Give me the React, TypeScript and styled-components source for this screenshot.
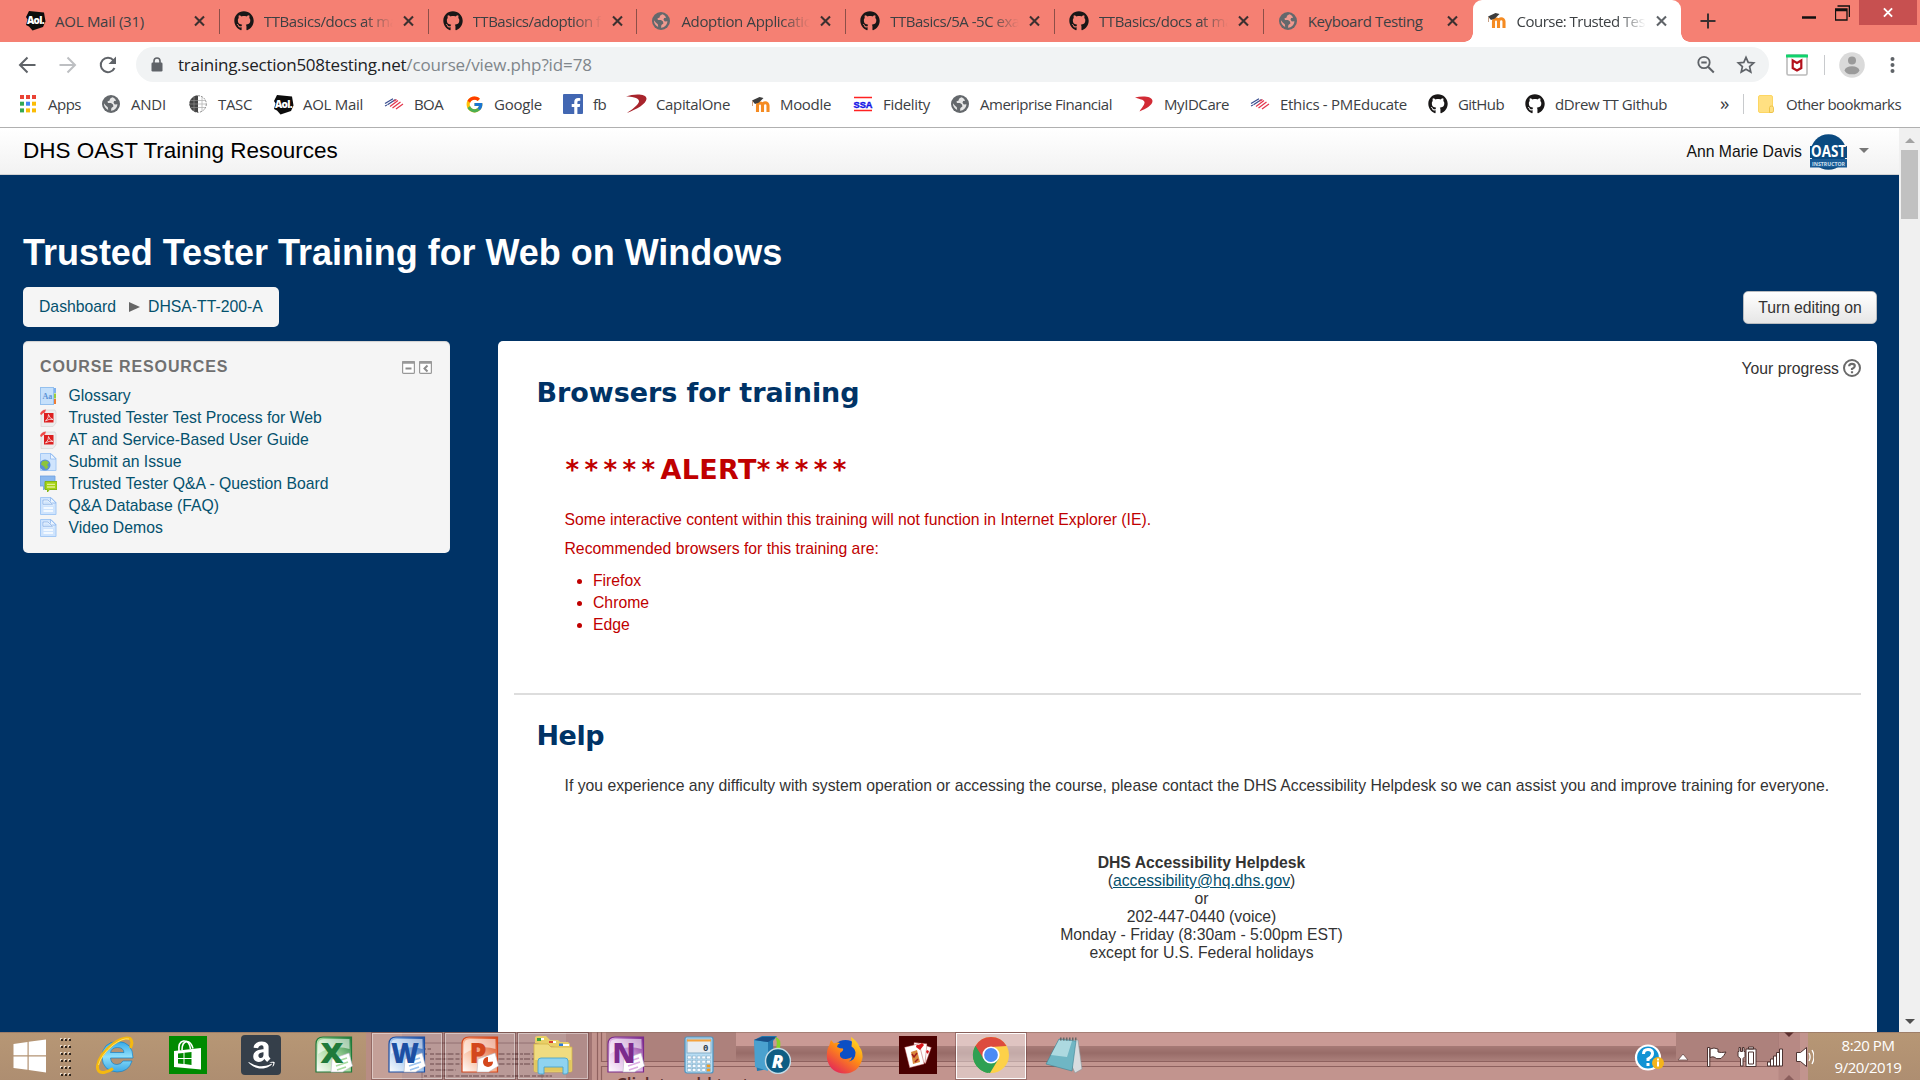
import React from 'react';
import styled, { createGlobalStyle, css } from 'styled-components';
import { FaGithub, FaFacebookF, FaAmazon } from 'react-icons/fa';
import { FcGoogle } from 'react-icons/fc';

const ui = "'Open Sans', 'Noto Sans', sans-serif";
const page = "'Liberation Sans', Arial, sans-serif";
const heading = "'DejaVu Sans', Verdana, sans-serif";

const GlobalStyle = createGlobalStyle`
  * { box-sizing: border-box; }
  body { margin: 0; background: #003366; }
  svg { display: block; flex: none; }
`;

/* ---------- window ---------- */

const Window = styled.div`
  width: 1920px;
  height: 1080px;
  display: flex;
  flex-direction: column;
  overflow: hidden;
  font-family: ${ui};
  color: #3c4043;
`;

const TabStrip = styled.div`
  height: 42px;
  flex: none;
  display: flex;
  padding-left: 11px;
  background: #f58073;
`;

const Tab = styled.div<{ $active?: boolean; $last?: boolean }>`
  position: relative;
  width: 208.8px;
  flex: none;
  display: flex;
  align-items: center;
  padding: 0 0 1px 14px;
  gap: 10px;
  ${p => p.$active && css`
    background: #fff;
    border-radius: 9px 9px 0 0;
    &::before, &::after {
      content: '';
      position: absolute;
      bottom: 0;
      width: 9px;
      height: 9px;
    }
    &::before { left: -9px; background: radial-gradient(circle at 0 0, transparent 8.5px, #fff 9px); }
    &::after { right: -9px; background: radial-gradient(circle at 100% 0, transparent 8.5px, #fff 9px); }
  `}
  ${p => !p.$active && !p.$last && css`
    &::after {
      content: '';
      position: absolute;
      right: 0;
      top: 9px;
      width: 1px;
      height: 25px;
      background: #8c4f48;
    }
  `}
`;

const TabTitle = styled.span<{ $fade?: boolean; $track?: number }>`
  width: 129px;
  overflow: hidden;
  white-space: nowrap;
  font-size: 15px;
  letter-spacing: ${p => p.$track ?? -0.4}px;
  ${p => p.$fade && css`mask-image: linear-gradient(90deg, #000 100px, transparent 129px);`}
`;

const NewTab = styled.div`
  display: flex;
  align-items: center;
  padding: 0 0 1px 19px;
`;

const WindowButtons = styled.div`
  margin-left: auto;
  padding-right: 3px;
  display: flex;
  align-items: flex-start;
`;

const CaptionButton = styled.div<{ $w: number }>`
  width: ${p => p.$w}px;
  height: 25px;
  display: flex;
  align-items: center;
  justify-content: center;
`;

const CloseButton = styled(CaptionButton)`
  background: #c75050;
`;

const Toolbar = styled.div`
  height: 45px;
  flex: none;
  display: flex;
  align-items: center;
  background: #fff;
  padding-left: 17px;
`;

const NavButtons = styled.div`
  display: flex;
  width: 119px;
  gap: 18px;
`;

const Omnibox = styled.div`
  width: 1633px;
  height: 35px;
  border-radius: 18px;
  background: #f1f3f4;
  display: flex;
  align-items: center;
  padding: 0 12px 0 13px;
`;

const Url = styled.span`
  margin-left: 13px;
  margin-right: auto;
  font-size: 17px;
  letter-spacing: -0.12px;
  color: #80868b;
  b { font-weight: 400; color: #202124; letter-spacing: -0.25px; }
`;

const OmniIcons = styled.div`
  display: flex;
  gap: 18px;
`;

const Extensions = styled.div`
  display: flex;
  align-items: center;
  padding-left: 17px;
`;

const VRule = styled.i<{ $ml: number; $mr: number }>`
  width: 1px;
  height: 20px;
  margin: 0 ${p => p.$mr}px 0 ${p => p.$ml}px;
  background: #c8cacd;
`;

const Bookmarks = styled.div`
  height: 41px;
  flex: none;
  display: flex;
  align-items: center;
  padding: 0 0 6px 18px;
  background: #fff;
  border-bottom: 1px solid #b0b0b0;
`;

const Bookmark = styled.div<{ $w: number }>`
  width: ${p => p.$w}px;
  display: flex;
  align-items: center;
  gap: 10px;
`;

const IconSlot = styled.div`
  width: 20px;
  display: flex;
  justify-content: center;
`;

const BookmarkLabel = styled.span<{ $track: number }>`
  font-size: 15px;
  white-space: nowrap;
  letter-spacing: ${p => p.$track}px;
`;

const Chevrons = styled.span`
  font-size: 19px;
  line-height: 20px;
  width: 15px;
  padding-bottom: 3px;
`;

/* ---------- web page ---------- */

const Viewport = styled.div`
  flex: 1;
  min-height: 0;
  display: flex;
`;

const Page = styled.div`
  width: 1899px;
  display: flex;
  flex-direction: column;
  background: #003366;
  font-family: ${page};
  font-size: 15.75px;
  line-height: 22px;
  color: #333;
`;

const SiteHeader = styled.header`
  height: 47px;
  flex: none;
  display: flex;
  align-items: center;
  justify-content: space-between;
  padding: 0 29px 0 23px;
  background: linear-gradient(#fff, #f2f2f2);
  border-bottom: 1px solid #d4d4d4;
  color: #000;
`;

const SiteName = styled.div`
  font-size: 22.5px;
  line-height: 28px;
  padding-bottom: 1px;
`;

const UserMenu = styled.div`
  display: flex;
  align-items: center;
  padding-top: 2px;
  color: #111;
`;

const Caret = styled.i`
  margin: 0 1px 4px 12px;
  border: 5px solid transparent;
  border-top-color: #777;
  border-bottom: 0;
`;

const Content = styled.div`
  flex: 1;
  min-height: 0;
  display: flex;
  flex-direction: column;
  padding: 58px 22px 0 23px;
`;

const Title = styled.h1`
  margin: 0 0 14px;
  font-size: 36px;
  line-height: 40px;
  letter-spacing: -0.03px;
  color: #fff;
`;

const NavRow = styled.div`
  display: flex;
  align-items: center;
  justify-content: space-between;
  margin-bottom: 14px;
`;

const Breadcrumb = styled.nav`
  height: 40px;
  display: flex;
  align-items: center;
  padding: 0 16px 1px 16px;
  border-radius: 5px;
  background: #f5f5f5;
  color: #04516d;
`;

const Arrow = styled.i`
  margin: 0 8px 0 13px;
  border: 5px solid transparent;
  border-left: 11px solid #666;
  border-right: 0;
`;

const EditButton = styled.button`
  width: 134px;
  height: 33px;
  margin-top: 1px;
  padding: 0;
  border: 1px solid #b9bcc0;
  border-radius: 5px;
  background: linear-gradient(#fff, #e6e6e6);
  font: 15.75px ${page};
  letter-spacing: -0.08px;
  color: #333;
`;

const Columns = styled.div`
  flex: 1;
  min-height: 0;
  display: flex;
  align-items: flex-start;
  gap: 48px;
`;

const Block = styled.aside`
  width: 427px;
  height: 212px;
  padding: 15px 18px 0 17px;
  border-radius: 5px;
  background: #f5f5f5;
  box-shadow: inset 0 1px 1px rgba(0, 0, 0, 0.15);
`;

const BlockHeader = styled.div`
  display: flex;
  align-items: center;
  margin-bottom: 7px;
  gap: 4px;
`;

const BlockTitle = styled.h2`
  margin: 0 auto 0 0;
  font-size: 16px;
  letter-spacing: 0.88px;
  color: #707070;
`;

const ResourceLink = styled.a`
  display: flex;
  align-items: center;
  gap: 11.5px;
  height: 22px;
  color: #04516d;
  svg { margin-bottom: 1px; }
`;

const Main = styled.main`
  flex: 1;
  align-self: stretch;
  overflow: hidden;
  padding: 17px 16px 0;
  border-radius: 5px 5px 0 0;
  background: #fff;
`;

const Progress = styled.div`
  display: flex;
  align-items: center;
  justify-content: flex-end;
  gap: 4px;
  height: 22px;
  svg { margin-bottom: 2px; }
`;

const SectionTitle = styled.h3<{ $mt: number; $track: number }>`
  margin: ${p => p.$mt}px 0 0 22.5px;
  font: 700 27px/32px ${heading};
  letter-spacing: ${p => p.$track}px;
  color: #003366;
`;

const Alert = styled.div`
  padding-left: 50.5px;
  color: #c00000;
  p { margin: 0 0 7px; }
`;

const AlertTitle = styled.h3`
  margin: 45px 0 23px 1px;
  font: 700 27px/32px ${heading};
  letter-spacing: 0.35px;
  i { font-style: normal; font-weight: 700; font-size: 26px; letter-spacing: 5.4px; }
`;

const BrowserList = styled.ul`
  margin: 10px 0 57px;
  padding-left: 28.5px;
`;

const Divider = styled.hr`
  margin: 0;
  border: 0;
  height: 2px;
  background: #ddd;
`;

const HelpText = styled.p`
  margin: 23px 0 57px 50.5px;
  white-space: nowrap;
`;

const Helpdesk = styled.address`
  margin-left: 28px;
  font-style: normal;
  line-height: 18px;
  text-align: center;
  a { color: #04516d; text-decoration: underline; }
`;

const Scrollbar = styled.div`
  width: 21px;
  display: flex;
  flex-direction: column;
  align-items: center;
  padding: 10px 0 8px;
  background: #f0f0f0;
`;

const ScrollArrow = styled.i<{ $down?: boolean }>`
  border: 5px solid transparent;
  ${p => p.$down
    ? 'border-top-color: #505050; border-bottom: 0; margin-top: auto;'
    : 'border-bottom-color: #a3a3a3; border-top: 0; margin-bottom: 7px;'}
`;

const Thumb = styled.div`
  width: 17px;
  height: 69px;
  background: #c1c1c1;
`;

/* ---------- taskbar ---------- */

const Taskbar = styled.div`
  position: relative;
  height: 48px;
  flex: none;
  display: flex;
  align-items: stretch;
  background: #c2948e;
  overflow: hidden;
`;

const Backdrop = styled.svg`
  position: absolute;
  inset: 0;
`;

const StartButton = styled.div`
  position: relative;
  width: 54px;
  display: flex;
  align-items: center;
  padding-left: 13px;
`;

const Grip = styled.div`
  position: relative;
  width: 24px;
  padding: 6px 0 0 6px;
`;

const TaskSlot = styled.div<{ $state?: 'open' | 'active' }>`
  position: relative;
  width: 73px;
  display: flex;
  align-items: center;
  justify-content: center;
  padding-bottom: 2px;
  ${p => p.$state && css`
    &::before {
      content: '';
      position: absolute;
      inset: 1px 1px 1px 2px;
      border: 1px solid rgba(255, 255, 255, ${p.$state === 'active' ? 0.95 : 0.42});
      background: rgba(255, 255, 255, ${p.$state === 'active' ? 0.42 : 0.17});
      outline: 1px solid rgba(80, 40, 40, 0.35);
    }
  `}
  svg { position: relative; }
`;

const Tray = styled.div`
  position: relative;
  margin-left: auto;
  display: flex;
  align-items: center;
`;

const Clock = styled.div`
  width: 104px;
  margin-left: 2px;
  font-size: 15px;
  line-height: 22px;
  letter-spacing: -0.45px;
  text-align: center;
  color: #fff;
`;

/* ---------- icons ---------- */

const CloseX = ({ c = '#3c3030', s = 11 }) => (
  <svg width={s} height={s + 1} viewBox="0 0 11 12"><path d="M1 1.5l9 9M10 1.5l-9 9" stroke={c} strokeWidth="2.1" /></svg>
);

const Aol = () => (
  <svg width="21" height="21" viewBox="0 0 21 21">
    <path d="M4 1l15 1.5 1.5 9L18 17 7.5 20.5 4 16.5 1 15 2.5 9.5 1 7z" fill="#0c0c0c" />
    <text x="10.4" y="13.6" fontFamily="Open Sans" fontWeight="800" fontSize="10" letterSpacing="-.7" textAnchor="middle" fill="#fff">Aol.</text>
  </svg>
);

const Globe = ({ land = '#e7e7e7' }) => (
  <svg width="18" height="18" viewBox="0 0 18 18">
    <circle cx="9" cy="9" r="9" fill="#64686c" />
    <path d="M10.3 2.2L8 3.8 7.6 5.6 5.4 6.4 6 8l3 .1 2 1.4.4 1.9-2 1.5-.4 2.9c3.6-.2 6.3-3 6.4-6.5l-2.6.2-1.3-1.7.6-1.7 2-.4C13.4 3.9 12.1 2.7 10.3 2.2zM1.9 8.2c0 3 1.6 5.6 4.3 6.7l-.4-2.7-1.8-1.4z" fill={land} />
  </svg>
);

const Tasc = () => (
  <svg width="18" height="18" viewBox="0 0 18 18">
    <circle cx="9" cy="9" r="8.3" fill="#fff" stroke="#8a8a8a" strokeDasharray="2 1" />
    <path d="M9 .5a8.5 8.5 0 0 0 0 17z" fill="#444" />
    <path d="M2 5.5h7M1 9h8M2 12.500h7M5 2v14" stroke="#999" strokeWidth=".6" />
    <path d="M9 5.5h7M9 9h8M9 12.500h7M13 2v14" stroke="#b5b5b5" strokeWidth=".8" />
  </svg>
);

const Boa = () => (
  <svg width="20" height="12" viewBox="0 0 20 12">
    <path d="M1 5.5L9 .8M3.5 6.800L11.500 1.500" stroke="#3a4e90" strokeWidth="1.300" />
    <path d="M1 8l2-1" stroke="#3a4e90" strokeWidth="1.200" />
    <path d="M6 8.500l8-6M8.500 10l8-6M12 11l7-5M9.500 3.200l3-1.700" stroke="#e4384e" strokeWidth="1.300" />
  </svg>
);

const Apps = () => (
  <svg width="16" height="18" viewBox="0 0 16 18">
    {['#ea4335', '#ea4335', '#ea4335', '#34a853', '#4285f4', '#fbbc05', '#34a853', '#fbbc05', '#fbbc05'].map((c, i) => (
      <rect key={i} x={(i % 3) * 6} y={Math.floor(i / 3) * 6.7} width="4" height="4" fill={c} />
    ))}
  </svg>
);

const Facebook = () => (
  <svg width="20" height="20" viewBox="0 0 20 20">
    <rect width="20" height="20" rx="1" fill="#4267b2" />
    <FaFacebookF x="5" y="4" size={16} color="#fff" />
  </svg>
);

const CapitalOne = () => (
  <svg width="21" height="20" viewBox="0 0 21 20">
    <path d="M0 2.500C8-.5 21-.5 20.500 5 20 10 11 15 1 19c5-3.500 12.500-8.500 12-12C12.500 3.500 5 2.500 0 2.500z" fill="#a8242c" />
  </svg>
);

const MyId = () => (
  <svg width="18" height="16" viewBox="0 0 18 16">
    <path d="M0 1.500C7-.5 17.500 0 17.500 5c0 4-6 7.500-13 10.500C6 12.500 10 9 9.500 6 9 3.500 4 3 0 1.500z" fill="#d22b35" />
  </svg>
);

const Moodle = () => (
  <svg width="21" height="17" viewBox="0 0 21 17">
    <path d="M7.500 16V9.500a2.400 2.400 0 0 1 5 0V16M12.500 9.500a2.600 2.600 0 0 1 5.500 0V16" fill="none" stroke="#f58b22" strokeWidth="3.100" />
    <path d="M2 4.500L9.500 1l4 1L9 6.500 5 8z" fill="#3d3d3d" />
    <path d="M2.500 5v5" stroke="#c9a184" strokeWidth="1" />
  </svg>
);

const Ssa = () => (
  <svg width="20" height="16" viewBox="0 0 20 16">
    <path d="M1 1.500h18M1 14.500h18" stroke="#f22" strokeWidth="1.700" />
    <text x="10" y="11.500" textAnchor="middle" textLength="19" lengthAdjust="spacingAndGlyphs" fontFamily="Liberation Sans" fontWeight="700" fontSize="9.500" fill="#1414e6" stroke="#1414e6" strokeWidth=".4">SSA</text>
  </svg>
);

const Folder = () => (
  <svg width="16" height="18" viewBox="0 0 16 18">
    <rect x=".5" y=".5" width="14" height="17" rx="1.500" fill="#ffe082" stroke="#fdd663" />
    <path d="M11.500 17.500v-5q0-1.500 2-1.500t2 1.500v3.500q0 1.500-1.500 1.500z" fill="#ffe082" stroke="#e9bd3c" strokeWidth=".8" />
  </svg>
);

const Doc = ({ kind }: { kind: string }) => (
  <svg width="17" height="18" viewBox="0 0 17 18">
    {kind === 'glossary' && <>
      <rect x="12" y="1" width="4" height="5" fill="#7fb0ee" /><rect x="12" y="6.500" width="4" height="5" fill="#9bce3b" /><rect x="12" y="12" width="4" height="5" fill="#ef7d35" />
      <rect x=".5" y=".5" width="13" height="17" fill="#c5e0fb" stroke="#94c0ee" />
      <text x="2.500" y="12" fontFamily="Liberation Serif" fontSize="8" fontWeight="700" fill="#5c93d6">Aa</text>
    </>}
    {kind === 'pdf' && <>
      <path d="M3 1h12l1 2v11l-3 3.500H1V5z" fill="#ececec" stroke="#d2d2d2" strokeWidth=".6" />
      <rect x="4" y="4" width="9.500" height="9.500" fill="#dd1f1f" />
      <path d="M0 5Q1 1 6 .500L5 3.500Q2 4 1.500 6z" fill="#f04a48" />
      <path d="M5.500 12Q9 9 8.500 5.500 9.500 9.500 13 10.500 9 9.500 5.500 12" fill="none" stroke="#fff" strokeWidth=".7" />
    </>}
    {(kind === 'doc' || kind === 'url') && <>
      <path d="M.5.5h10.500l5 5v12H.5z" fill="#cfe4fd" stroke="#a4c9f5" />
      <path d="M10.500.5v5.500h5.500z" fill="#eaf4ff" stroke="#8fb8ee" strokeWidth=".8" />
      {kind === 'doc' && <path d="M3.500 3.500h5l4 4h-9zM3.500 11h9.500M3.500 14h9.500" fill="none" stroke="#fff" strokeWidth="1.300" />}
      {kind === 'doc' && <path d="M3 3h5l4.500 4.300H3z" fill="none" stroke="#7da9e4" strokeWidth=".8" />}
      {kind === 'url' && <><circle cx="5" cy="12" r="5.500" fill="#5c8fd6" /><path d="M2 8.500l4-1 3 2-2 2.500 1.500 2-2.500 2.500-2-3-3-2z" fill="#8cc43c" /></>}
    </>}
    {kind === 'forum' && <>
      <path d="M0 1h15v10H7l-3.500 4V11H0z" fill="#8cb9ef" stroke="#6d9fe0" strokeWidth=".8" />
      <path d="M5 6.500h12v8H9.500L7.500 17v-2.500H5z" fill="#a5d314" stroke="#7db10a" strokeWidth=".9" />
      <path d="M7 9.300h8M7 12h8" stroke="#dff08f" strokeWidth="1.300" />
    </>}
  </svg>
);

const BlockButton = ({ d }: { d: string }) => (
  <svg width="13" height="13" viewBox="0 0 13 13">
    <rect x=".6" y=".6" width="11.800" height="11.800" rx="1" fill="#fff" stroke="#999" strokeWidth="1.200" />
    <path d="M0 1.500h13" stroke="#999" strokeWidth="2.500" />
    <path d={d} stroke="#8c8c8c" strokeWidth="2" fill="none" />
  </svg>
);

const HelpIcon = () => (
  <svg width="18" height="18" viewBox="0 0 18 18">
    <circle cx="9" cy="9" r="8" fill="#fff" stroke="#6a6a6a" strokeWidth="2" />
    <path d="M6.200 7.200Q6.200 4.800 9 4.800t2.800 2.200Q11.800 8.500 9 10v1" fill="none" stroke="#6a6a6a" strokeWidth="2.200" />
    <path d="M7.900 12.300h2.200v2H7.900z" fill="#6a6a6a" />
  </svg>
);

const Oast = () => (
  <svg width="37" height="36" viewBox="0 0 37 36">
    <circle cx="18.500" cy="18" r="17.800" fill="#0a4a80" />
    <rect x="0" y="12" width="37" height="12" fill="#0a4a80" />
    <text x="18.500" y="23.400" textAnchor="middle" textLength="35" lengthAdjust="spacingAndGlyphs" fontFamily="Open Sans" fontWeight="700" fontSize="16" fill="#fff">OAST</text>
    <rect x="0" y="25" width="37" height="8.500" fill="#1a5c96" />
    <text x="18.500" y="31.500" textAnchor="middle" textLength="33" lengthAdjust="spacingAndGlyphs" fontFamily="Open Sans" fontWeight="700" fontSize="6" fill="#cfe0ef">INSTRUCTOR</text>
  </svg>
);

const Windows = () => (
  <svg width="34" height="34" viewBox="0 0 34 34">
    <path d="M.5 5L14.500 3v13.300H.5zM15.700 2.800L33 .5v15.800H15.700zM.5 17.500h14v13.300L.5 29zM15.700 17.500H33v16L15.700 31z" fill="#fff" />
  </svg>
);

const GripDots = () => (
  <svg width="12" height="38" viewBox="0 0 12 38">
    {Array.from({ length: 18 }, (_, i) => (
      <g key={i}>
        <rect x={(i % 3) * 4} y={Math.floor(i / 3) * 7} width="2" height="2" fill="#e9d9c8" />
        <rect x={(i % 3) * 4 + 1} y={Math.floor(i / 3) * 7 + 1} width="2" height="2" fill="#30261e" />
      </g>
    ))}
  </svg>
);

const Ie = () => (
  <svg width="38" height="38" viewBox="0 0 38 38">
    <defs><linearGradient id="ie" x2="0" y2="1"><stop stopColor="#35a8e8" /><stop offset=".5" stopColor="#8fe0fb" /><stop offset="1" stopColor="#3ba9e6" /></linearGradient></defs>
    <path fillRule="evenodd" d="M37 22H14.500q.5 6.500 6.500 6.500 4 0 6-3.500h9Q32.500 36 21 36 6.500 35 6 21 6.500 6 21.500 5.500 37 6 37 22zM14.500 16.500h13.500Q27.500 11.500 21.500 11.500 15.500 11.500 14.500 16.500z" fill="url(#ie)" stroke="#1583c8" strokeWidth=".7" />
    <path d="M34.500 12Q37.500 5 34 2.500 28 0 17 8 3 19 1.500 30 1 37 8 36.500 13 35.500 17 32.500" fill="none" stroke="#f5b90f" strokeWidth="3" />
    <path d="M33 3Q27 1.500 17 9 5 19 2.500 29" fill="none" stroke="#ffe469" strokeWidth="1" />
  </svg>
);

const Store = () => (
  <svg width="38" height="38" viewBox="0 0 38 38">
    <rect width="38" height="38" fill="#008a00" />
    <path d="M5 15l27-3v21.500L5 31z" fill="#fff" />
    <path d="M10 15q-1-9 4.500-10 6-.5 7 8M13 14q0-8 5-8.500 4 0 6 7" fill="none" stroke="#fff" strokeWidth="1.600" />
    <path d="M9 17.500l5.500-.6v5H9zM15.500 16.800l7-.8v5.900h-7zM9 22.900h5.500v5L9 27.400zM15.500 22.900h7v6l-7-.8z" fill="#008a00" />
  </svg>
);

const Amazon = () => (
  <svg width="40" height="40" viewBox="0 0 40 40">
    <rect width="40" height="40" rx="4" fill="#353f4a" />
    <FaAmazon x="5" y="4.500" size={31} color="#fff" />
  </svg>
);

const Office = ({ letter, c, light }: { letter: string; c: string; light: string }) => (
  <svg width="38" height="38" viewBox="0 0 38 38">
    <defs><linearGradient id={'of' + letter} x1="0" y1="1" x2="1" y2="0"><stop stopColor="#fff" /><stop offset=".5" stopColor={light} /><stop offset="1" stopColor={c} /></linearGradient></defs>
    <path d="M8 1h28.500v35H1V8Q1 1 8 1z" fill={`url(#of${letter})`} stroke={c} strokeWidth="1.200" />
    <path d="M3 9q0-6 6-6h25.500v10Q18 8 3 18z" fill="#fff" opacity=".55" />
    <path d="M17 23l17-6 3.500 13-10 6H16z" fill="#fff" stroke="#b9b9c4" strokeWidth=".6" />
    {letter === 'P'
      ? <><circle cx="27" cy="26" r="5" fill={c} /><path d="M27 26v-5.500a5.500 5.500 0 0 1 5.500 5z" fill="#fff" /></>
      : <path d="M20 26l12-4M21 30l12-4M22 34l9-3" stroke={light} strokeWidth="1.800" />}
    <text x="17" y="27" textAnchor="middle" textLength={letter === 'P' ? 17 : letter === 'W' ? 28 : 23} lengthAdjust="spacingAndGlyphs" fontFamily="Open Sans" fontWeight="800" fontSize="29" fill={c}>{letter}</text>
  </svg>
);

const Explorer = () => (
  <svg width="40" height="40" viewBox="0 0 40 40">
    <path d="M2 8V3q0-2 3-2h8l2 2 2 2h8l2 2h8l2 2v6z" fill="#e9cf66" />
    <path d="M6 3h5v2H6zM18 6h5v2h-5zM28 9h8v2h-8z" fill="#fff" /><path d="M4 3h4v3H4z" fill="#3da33b" /><path d="M16 6h4v2h-4z" fill="#d83b2e" /><path d="M26 8.500h4v2.500h-4z" fill="#2e7bd8" />
    <path d="M1 9h14l3 3h21v24q0 1-2 1H3q-2 0-2-1z" fill="#f0dc80" stroke="#d3b248" strokeWidth=".8" />
    <path d="M1.500 25h37v11h-37z" fill="#e2c75e" />
    <path d="M5 37V26q0-3 3-3h24q3 0 3 3v11q0 2-2 2h-3V32H11v7H7q-2 0-2-2z" fill="#8fd3ef" stroke="#4ba4cb" strokeWidth=".9" />
  </svg>
);

const Calc = () => (
  <svg width="30" height="38" viewBox="0 0 30 38">
    <rect x="1" y="1" width="28" height="36" rx="2" fill="#b6dcf3" stroke="#4a94c2" strokeWidth="1.200" />
    <rect x="3" y="3" width="24" height="14" fill="#e9edf0" stroke="#85aec9" /><path d="M3 4.500h24" stroke="#f5a23b" strokeWidth="2" />
    <text x="19" y="15" fontFamily="Liberation Mono" fontWeight="700" fontSize="9" fill="#26384a">0</text>
    {Array.from({ length: 20 }, (_, i) => <rect key={i} x={3.5 + (i % 5) * 4.8} y={20 + Math.floor(i / 5) * 4.2} width="3.600" height="2.900" fill={i % 5 === 4 && i > 9 ? '#f39a1d' : '#f7fbff'} stroke="#7ea9c4" strokeWidth=".5" />)}
  </svg>
);

const Revo = () => (
  <svg width="38" height="38" viewBox="0 0 38 38">
    <path d="M1 4l8-4h15l-4 5 1 27-17 3z" fill="#2378ad" /><path d="M1 4l14 2v29L2 31z" fill="#4aa1cf" /><path d="M1 4l8-3h15l-9 5z" fill="#1a4f86" />
    <path d="M22 1q7 1 5 12h4l-7 7-5-7h4Q25 5 22 1z" fill="#86d22c" />
    <circle cx="25" cy="25" r="12.500" fill="#0e5d84" stroke="#c5dbe6" strokeWidth="1.500" />
    <text x="24.500" y="31.500" textAnchor="middle" fontFamily="Open Sans" fontWeight="800" fontStyle="italic" fontSize="18" fill="#fff">R</text>
  </svg>
);

const Firefox = () => (
  <svg width="38" height="38" viewBox="0 0 38 38">
    <defs><linearGradient id="ff" x1=".9" y1="0" x2=".2" y2="1"><stop stopColor="#ffe226" /><stop offset=".45" stopColor="#ff9012" /><stop offset="1" stopColor="#e3225c" /></linearGradient></defs>
    <circle cx="19.500" cy="18.500" r="14.500" fill="#0c4fc4" />
    <path d="M25 1q6 4 8 9 5 7 3 14-4 13-17 13.500Q4 37 1 23 0 14 3.500 9q.5-3 1.500-5 2 2 3 3.500 3-1.500 6-.5-3 1.500-3 4 3 1.500 6 1.500 1 2-3 4.500-1 6 6 6 4-.5 6-2-.5 3-3.500 4.500 7-1 7-9-.5-4-4-6 1-5-.5-9z" fill="url(#ff)" />
  </svg>
);

const Solitaire = () => (
  <svg width="38" height="38" viewBox="0 0 38 38">
    <rect width="38" height="38" fill="#4a0000" />
    <g stroke="#a33" strokeWidth=".4">
      <rect x="18" y="9" width="12" height="17" fill="#fff" transform="rotate(20 24 17)" />
      <rect x="14" y="7" width="13" height="19" fill="#fff" transform="rotate(6 20 17)" />
      <rect x="8" y="9" width="15" height="21" fill="#fff" transform="rotate(-14 16 20)" />
    </g>
    <path d="M20 9l3-2 2 2-4 5-4-3q0-3 3-2z" fill="#d8161b" /><path d="M12 16l6-2 3 12-7 2z" fill="#d98a3d" /><path d="M13 18l2 3 3-4M16 26l3-3" stroke="#a01c1c" strokeWidth="1.500" fill="none" />
    <path d="M28 14l2 1-1 3-2-2z" fill="#d8161b" />
  </svg>
);

const Chrome = () => (
  <svg width="38" height="38" viewBox="0 0 38 38">
    <circle cx="19" cy="19" r="18" fill="#fdd149" />
    <path d="M19 19L3.400 10A18 18 0 0 0 18 37l8.500-14z" fill="#2ea052" />
    <path d="M3.400 10A18 18 0 0 1 34.600 10L19 11 11.500 23z" fill="#dd4b3e" />
    <path d="M3.400 10L12 24l7 4-3 9A18 18 0 0 1 3.400 10z" fill="#2ea052" />
    <circle cx="19" cy="19" r="8.600" fill="#fff" /><circle cx="19" cy="19" r="6.900" fill="#4b8bf5" />
  </svg>
);

const Notepad = () => (
  <svg width="38" height="38" viewBox="0 0 38 38">
    <path d="M15 3l18 1 4 29-7 4z" fill="#d8dcdf" stroke="#8b9499" strokeWidth=".6" />
    <path d="M14 3l17 2-4 30L1 28z" fill="#6fb6c4" stroke="#3e8394" strokeWidth=".6" />
    <path d="M14 4l13 1-5 16L6 19z" fill="#c8e8ec" opacity=".7" />
    <path d="M15 3h17" stroke="#666" strokeWidth="3" strokeDasharray="1.500 1.500" />
  </svg>
);

const TaskbarBackdrop = () => (
  <Backdrop width="1920" height="48" viewBox="0 0 1920 48">
    <defs>
      <linearGradient id="tan" x2="0" y2="1"><stop stopColor="#b79775" /><stop offset="1" stopColor="#ae8e71" /></linearGradient>
      <linearGradient id="dusk" x2="0" y2="1"><stop stopColor="#a87c78" /><stop offset=".5" stopColor="#986c68" /><stop offset="1" stopColor="#ab807b" /></linearGradient>
    </defs>
    <rect width="366" height="48" fill="url(#tan)" />
    <rect x="366" width="36" height="48" fill="#b88d84" />
    <rect x="402" width="164" height="48" fill="#ab8583" />
    <rect x="566" width="26" height="48" fill="#a27573" />
    <rect x="606" width="1173" height="29" fill="#ad817c" />
    <rect x="736" y="13" width="940" height="16" fill="url(#dusk)" />
    <rect x="736" width="940" height="14" fill="#c99a95" />
    <path d="M597.500 0v48M601.500 0v29.500H1779M1799 34.500H601.500V48M1779.500 0v48" fill="none" stroke="#8f625f" strokeWidth="1.200" />
    <rect x="1779" width="21" height="48" fill="#b78984" />
    <path d="M1784 0h10l-5 5z" fill="#5c2f2f" /><path d="M1784 48h10l-5-5z" fill="#8b5f5d" />
    <rect x="1808" width="112" height="48" fill="url(#tan)" />
    <path d="M422 48V11h120v37" fill="none" stroke="#7d5556" />
    <g stroke="#6d4646" strokeWidth="2" strokeDasharray="4 1.500 7 1 3 1 6 2">
      <path d="M422 17h9M424 22h3M430 22h104M430 27h104M430 32h104M430 38h26M424 44h3M430 44h122" opacity=".75" />
    </g>
    <text x="616" y="58.500" textLength="133" lengthAdjust="spacingAndGlyphs" fontFamily="Open Sans" fontWeight="600" fontSize="18" fill="#5b2f2c">Click to add text</text>
    <path d="M0 .5h1920" stroke="#8a6a5e" opacity=".55" />
  </Backdrop>
);

/* ---------- data ---------- */

const gh = <FaGithub size={20} color="#191717" />;

const tabs: { icon: React.ReactNode; title: string; fade?: boolean; active?: boolean; track?: number }[] = [
  { icon: <Aol />, title: 'AOL Mail (31)', track: -0.25 },
  { icon: gh, title: 'TTBasics/docs at ma', fade: true },
  { icon: gh, title: 'TTBasics/adoption f', fade: true, track: -0.49 },
  { icon: <Globe land="#f09a90" />, title: 'Adoption Applicatio', fade: true, track: -0.33 },
  { icon: gh, title: 'TTBasics/5A -5C exa', fade: true, track: -0.48 },
  { icon: gh, title: 'TTBasics/docs at ma', fade: true },
  { icon: <Globe land="#f09a90" />, title: 'Keyboard Testing' },
  { icon: <Moodle />, title: 'Course: Trusted Tes', fade: true, active: true, track: -0.53 },
];

const bookmarks: [React.ReactNode, string, number, number][] = [
  [<Apps />, 'Apps', 83, -0.5],
  [<Globe />, 'ANDI', 87, -0.22],
  [<Tasc />, 'TASC', 85, -0.35],
  [<Aol />, 'AOL Mail', 111, -0.28],
  [<Boa />, 'BOA', 80, -0.6],
  [<FcGoogle size={19} />, 'Google', 99, -0.22],
  [<Facebook />, 'fb', 63, -0.6],
  [<CapitalOne />, 'CapitalOne', 124, -0.35],
  [<Moodle />, 'Moodle', 103, -0.32],
  [<Ssa />, 'Fidelity', 97, -0.32],
  [<Globe />, 'Ameriprise Financial', 184, -0.48],
  [<MyId />, 'MyIDCare', 116, -0.43],
  [<Boa />, 'Ethics - PMEducate', 178, -0.29],
  [gh, 'GitHub', 97, -0.58],
  [gh, 'dDrew TT Github', 195, -0.41],
];

const resources = [
  ['glossary', 'Glossary'],
  ['pdf', 'Trusted Tester Test Process for Web'],
  ['pdf', 'AT and Service-Based User Guide'],
  ['url', 'Submit an Issue'],
  ['forum', 'Trusted Tester Q&A - Question Board'],
  ['doc', 'Q&A Database (FAQ)'],
  ['doc', 'Video Demos'],
];

const tasks: [React.ReactNode, ('open' | 'active')?][] = [
  [<Ie />], [<Store />], [<Amazon />],
  [<Office letter="X" c="#1f7a3a" light="#a9dba0" />],
  [<Office letter="W" c="#1d4fa3" light="#9cc3ee" />, 'open'],
  [<Office letter="P" c="#d4471c" light="#f7b08c" />, 'open'],
  [<Explorer />, 'open'],
  [<Office letter="N" c="#7b2a8c" light="#dcaee3" />],
  [<Calc />], [<Revo />], [<Firefox />], [<Solitaire />],
  [<Chrome />, 'active'], [<Notepad />],
];

/* ---------- app ---------- */

export default function App() {
  return (
    <Window>
      <GlobalStyle />
      <TabStrip>
        {tabs.map((t, i) => (
          <Tab key={i} $active={t.active} $last={i === 6}>
            <IconSlot>{t.icon}</IconSlot>
            <TabTitle $fade={t.fade} $track={t.track}>{t.title}</TabTitle>
            <CloseX c={t.active ? '#5f6368' : undefined} />
          </Tab>
        ))}
        <NewTab><svg width="16" height="16" viewBox="0 0 16 16"><path d="M8 .5v15M.5 8h15" stroke="#3a2f30" strokeWidth="2" /></svg></NewTab>
        <WindowButtons>
          <CaptionButton $w={34}><svg width="14" height="20"><path d="M0 14.500h14" stroke="#111" strokeWidth="2.500" /></svg></CaptionButton>
          <CaptionButton $w={33}><svg width="15" height="16"><path d="M.5 4h11.500v11H.5zM.5 5.500H12" fill="none" stroke="#111" strokeWidth="1.300" /><path d="M2.500 1h12v11" fill="none" stroke="#111" strokeWidth="1.600" /></svg></CaptionButton>
          <CloseButton $w={58}><CloseX c="#fff" s={10} /></CloseButton>
        </WindowButtons>
      </TabStrip>

      <Toolbar>
        <NavButtons>
          <svg width="22" height="22" viewBox="0 0 22 22"><path d="M18.500 11H3M10.500 3.500L3 11l7.500 7.500" fill="none" stroke="#5f6368" strokeWidth="2" /></svg>
          <svg width="22" height="22" viewBox="0 0 22 22"><path d="M2.500 11H18M10.500 3.500L18 11l-7.500 7.500" fill="none" stroke="#bdbfc2" strokeWidth="2" /></svg>
          <svg width="22" height="22" viewBox="0 0 22 22"><path d="M17.500 14A7.200 7.200 0 1 1 16.500 6.300" fill="none" stroke="#5f6368" strokeWidth="2" /><path d="M19 2.500v7.500h-7.500z" fill="#5f6368" /></svg>
        </NavButtons>
        <Omnibox>
          <svg width="16" height="18" viewBox="0 0 16 18"><rect x="2.500" y="6.500" width="11" height="9" rx="1.200" fill="#5f6368" /><path d="M5 7V5a3 3 0 0 1 6 0v2" fill="none" stroke="#5f6368" strokeWidth="1.600" /></svg>
          <Url><b>training.section508testing.net</b>/course/view.php?id=78</Url>
          <OmniIcons>
            <svg width="22" height="22" viewBox="0 0 22 22"><circle cx="9" cy="8.500" r="5.700" fill="none" stroke="#5f6368" strokeWidth="1.800" /><path d="M6.300 8.500h5.400M13.300 13l5.500 5.500" stroke="#5f6368" strokeWidth="2" /></svg>
            <svg width="22" height="22" viewBox="0 0 22 22"><path d="M11 3.300l2.200 5.100 5.500.5-4.100 3.700 1.200 5.400L11 15.200 6.200 18l1.200-5.400L3.300 8.900l5.500-.5z" fill="none" stroke="#5f6368" strokeWidth="1.700" /></svg>
          </OmniIcons>
        </Omnibox>
        <Extensions>
          <svg width="22" height="22" viewBox="0 0 22 22"><rect x="1" y="1" width="20" height="20" rx="1.500" fill="#fff" stroke="#bbb" strokeWidth="1.600" /><path d="M0 2h22" stroke="#10d36c" strokeWidth="3" /><path d="M6.700 6.500v7.500L11 16.500l4.300-2.500V6.500L11 9z" fill="none" stroke="#b3101c" strokeWidth="2.200" /></svg>
          <VRule $ml={16} $mr={14} />
          <svg width="26" height="26" viewBox="0 0 26 26"><circle cx="13" cy="13" r="12.800" fill="#dadada" /><circle cx="13" cy="8.500" r="4" fill="#9a9a9a" /><ellipse cx="13" cy="18.300" rx="7.300" ry="4" fill="#9a9a9a" /></svg>
          <svg width="54" height="20" viewBox="0 0 54 20"><g fill="#5f6368"><circle cx="27.500" cy="4" r="2" /><circle cx="27.500" cy="10" r="2" /><circle cx="27.500" cy="16" r="2" /></g></svg>
        </Extensions>
      </Toolbar>

      <Bookmarks>
        {bookmarks.map(([icon, label, w, track]) => (
          <Bookmark key={label} $w={w}><IconSlot>{icon}</IconSlot><BookmarkLabel $track={track}>{label}</BookmarkLabel></Bookmark>
        ))}
        <Chevrons>»</Chevrons>
        <VRule $ml={8} $mr={12} />
        <Bookmark $w={150}><IconSlot><Folder /></IconSlot><BookmarkLabel $track={-0.54}>Other bookmarks</BookmarkLabel></Bookmark>
      </Bookmarks>

      <Viewport>
        <Page>
          <SiteHeader>
            <SiteName>DHS OAST Training Resources</SiteName>
            <UserMenu>
              <span>Ann Marie Davis</span>
              <svg width="45" height="36"><g transform="translate(8)"><Oast /></g></svg>
              <Caret />
            </UserMenu>
          </SiteHeader>
          <Content>
            <Title>Trusted Tester Training for Web on Windows</Title>
            <NavRow>
              <Breadcrumb><span>Dashboard</span><Arrow /><span>DHSA-TT-200-A</span></Breadcrumb>
              <EditButton>Turn editing on</EditButton>
            </NavRow>
            <Columns>
              <Block>
                <BlockHeader>
                  <BlockTitle>COURSE RESOURCES</BlockTitle>
                  <BlockButton d="M3.500 7.500h6" />
                  <BlockButton d="M8.500 4.500L5.500 7.500l3 3" />
                </BlockHeader>
                {resources.map(([kind, label]) => (
                  <ResourceLink key={label}><Doc kind={kind} />{label}</ResourceLink>
                ))}
              </Block>
              <Main>
                <Progress><span>Your progress</span><HelpIcon /></Progress>
                <SectionTitle $mt={-3} $track={-0.06}>Browsers for training</SectionTitle>
                <Alert>
                  <AlertTitle><i>*****</i>ALERT<i>*****</i></AlertTitle>
                  <p>Some interactive content within this training will not function in Internet Explorer (IE).</p>
                  <p>Recommended browsers for this training are:</p>
                  <BrowserList><li>Firefox</li><li>Chrome</li><li>Edge</li></BrowserList>
                </Alert>
                <Divider />
                <SectionTitle $mt={25} $track={-0.5}>Help</SectionTitle>
                <HelpText>If you experience any difficulty with system operation or accessing the course, please contact the DHS Accessibility Helpdesk so we can assist you and improve training for everyone.</HelpText>
                <Helpdesk>
                  <b>DHS Accessibility Helpdesk</b><br />
                  (<a>accessibility@hq.dhs.gov</a>)<br />
                  or<br />
                  202-447-0440 (voice)<br />
                  Monday - Friday (8:30am - 5:00pm EST)<br />
                  except for U.S. Federal holidays
                </Helpdesk>
              </Main>
            </Columns>
          </Content>
        </Page>
        <Scrollbar><ScrollArrow /><Thumb /><ScrollArrow $down /></Scrollbar>
      </Viewport>

      <Taskbar>
        <TaskbarBackdrop />
        <StartButton><Windows /></StartButton>
        <Grip><GripDots /></Grip>
        {tasks.map(([icon, state], i) => <TaskSlot key={i} $state={state}>{icon}</TaskSlot>)}
        <Tray>
          <svg width="180" height="48" viewBox="0 0 180 48">
            <circle cx="14" cy="25.500" r="12" fill="#1193d4" stroke="#fff" strokeWidth="2.200" />
            <path d="M9.500 22q0-4.500 4.500-4.500t4.500 4Q18.500 24.500 14 27v2" fill="none" stroke="#fff" strokeWidth="3" /><path d="M12.500 31h3v3h-3z" fill="#fff" />
            <circle cx="24" cy="31" r="6" fill="#f4b41c" /><path d="M24 29.500v5M24 26.500v2" stroke="#fff" strokeWidth="2" />
            <path d="M44 28l5-6 5 6z" fill="#fff" stroke="#6b4a48" strokeWidth=".8" />
            <g fill="#fff" stroke="#4d3331" strokeWidth="1">
              <path d="M73.500 15.500h2.300v19h-2.300zM76 17q4-2 8 0v3q3 1 8 0-2 4-5 6.500-5 1-7-1.500-2-.5-4 .5z" />
              <path d="M105 15.500h1.500v4h2v-4h1.500v4h1v5l-2 2v7.500h-2.500v-7.500l-2.500-2v-5h1zM112 17h10v17.500h-10zM114.500 15h5v2h-5z" />
              <path d="M114.500 20h5v12h-5z" />
              <path d="M133.500 30h3v4h-3zM136.500 27h3v7h-3zM139.500 24h3v10h-3zM142.500 20.500h3v13.500h-3zM145.500 17h3v17h-3z" />
              <path d="M162.500 20.500h4l6-5v19l-6-5h-4z" />
            </g>
            <path d="M175 21q2.200 4 0 8M178 18q4 7 0 14" fill="none" stroke="#fff" strokeWidth="1.300" />
          </svg>
          <Clock>8:20 PM<br />9/20/2019</Clock>
        </Tray>
      </Taskbar>
    </Window>
  );
}
